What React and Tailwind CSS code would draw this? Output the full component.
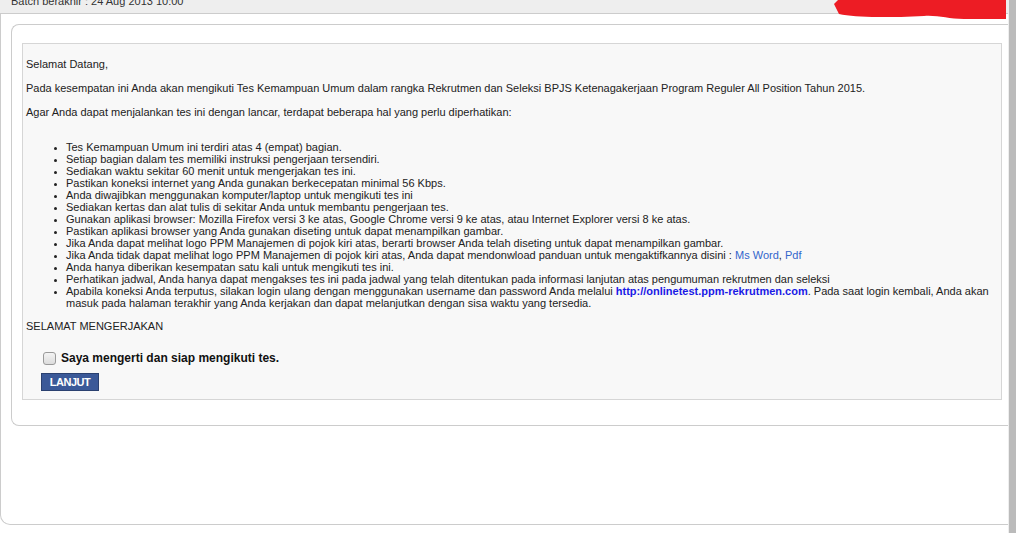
import React from "react";

const items = [
  "Tes Kemampuan Umum ini terdiri atas 4 (empat) bagian.",
  "Setiap bagian dalam tes memiliki instruksi pengerjaan tersendiri.",
  "Sediakan waktu sekitar 60 menit untuk mengerjakan tes ini.",
  "Pastikan koneksi internet yang Anda gunakan berkecepatan minimal 56 Kbps.",
  "Anda diwajibkan menggunakan komputer/laptop untuk mengikuti tes ini",
  "Sediakan kertas dan alat tulis di sekitar Anda untuk membantu pengerjaan tes.",
  "Gunakan aplikasi browser: Mozilla Firefox versi 3 ke atas, Google Chrome versi 9 ke atas, atau Internet Explorer versi 8 ke atas.",
  "Pastikan aplikasi browser yang Anda gunakan diseting untuk dapat menampilkan gambar.",
  "Jika Anda dapat melihat logo PPM Manajemen di pojok kiri atas, berarti browser Anda telah diseting untuk dapat menampilkan gambar.",
];

const RedMark = () => (
  <svg
    className="absolute top-0 left-[834px]"
    width="172"
    height="20"
    viewBox="0 0 172 20"
  >
    <path
      d="M4 0 H172 V19 H130 C114 19 104 15 90 16 C74 17 60 17 44 17 C28 17 14 16 5 14 L0 4 Z"
      fill="#ed1c24"
    />
  </svg>
);

export default function App() {
  return (
    <div className="relative flex h-[533px] w-[1016px] overflow-hidden bg-white font-['Liberation_Sans',Arial,sans-serif] text-[11px] text-[#222]">
      <div className="flex w-[1008px] flex-col">
        <div className="h-[14px] shrink-0 overflow-hidden border-b border-[#cccccc] bg-[#eeeeee] pl-[11px]">
          <div className="-mt-[5px] leading-[12px] text-[#333]">
            Batch berakhir : 24 Aug 2013 10:00
          </div>
        </div>
        <div className="flex h-[511px] flex-col rounded-bl-[10px] border-b border-l border-[#cccccc] pt-[10px] pl-[10px]">
          <div className="rounded-tl-[8px] rounded-bl-[8px] border-y border-l border-[#cccccc] pt-[18px] pb-[25px] pl-[10px] pr-[6px]">
            <div className="border border-[#d6d6d6] bg-[#f8f8f8] px-[3px] pt-[2px] pb-[8px] leading-[12px]">
              <p className="my-[12px]">Selamat Datang,</p>
              <p className="my-[12px]">
                Pada kesempatan ini Anda akan mengikuti Tes Kemampuan Umum dalam rangka Rekrutmen dan Seleksi BPJS Ketenagakerjaan Program Reguler All Position Tahun 2015.
              </p>
              <p className="mt-[12px]">
                Agar Anda dapat menjalankan tes ini dengan lancar, terdapat beberapa hal yang perlu diperhatikan:
              </p>
              <ul className="mt-[23px] mb-[11px] list-disc pl-[40px] marker:text-[9px]">
                {items.map((t) => (
                  <li key={t}>{t}</li>
                ))}
                <li>
                  Jika Anda tidak dapat melihat logo PPM Manajemen di pojok kiri atas, Anda dapat mendonwload panduan untuk mengaktifkannya disini :{" "}
                  <a className="text-[#3366cc]">Ms Word</a>,{" "}
                  <a className="text-[#3366cc]">Pdf</a>
                </li>
                <li>Anda hanya diberikan kesempatan satu kali untuk mengikuti tes ini.</li>
                <li>
                  Perhatikan jadwal, Anda hanya dapat mengakses tes ini pada jadwal yang telah ditentukan pada informasi lanjutan atas pengumuman rekrutmen dan seleksi
                </li>
                <li>
                  Apabila koneksi Anda terputus, silakan login ulang dengan menggunakan username dan password Anda melalui{" "}
                  <a className="font-bold text-[#1a1ae6]">http://onlinetest.ppm-rekrutmen.com</a>. Pada saat login kembali, Anda akan masuk pada halaman terakhir yang Anda kerjakan dan dapat melanjutkan dengan sisa waktu yang tersedia.
                </li>
              </ul>
              <p>SELAMAT MENGERJAKAN</p>
              <label className="mt-[18px] flex items-center gap-[5px] pl-[17px]">
                <span className="inline-block h-[13px] w-[13px] rounded-[3px] border border-[#9a9a9a] bg-gradient-to-b from-[#f4f4f4] to-[#dcdcdc]" />
                <span className="text-[12px] font-bold leading-[16px] text-[#111]">
                  Saya mengerti dan siap mengikuti tes.
                </span>
              </label>
              <button className="mt-[7px] ml-[15px] block h-[18px] w-[58px] border border-[#2b4170] bg-[#3b5998] text-[11px] font-bold leading-[16px] tracking-[-0.5px] text-white">
                LANJUT
              </button>
            </div>
          </div>
        </div>
      </div>
      <div className="w-[8px] border-l border-[#eeeeee] bg-[#bbbbbb]" />
      <RedMark />
    </div>
  );
}
